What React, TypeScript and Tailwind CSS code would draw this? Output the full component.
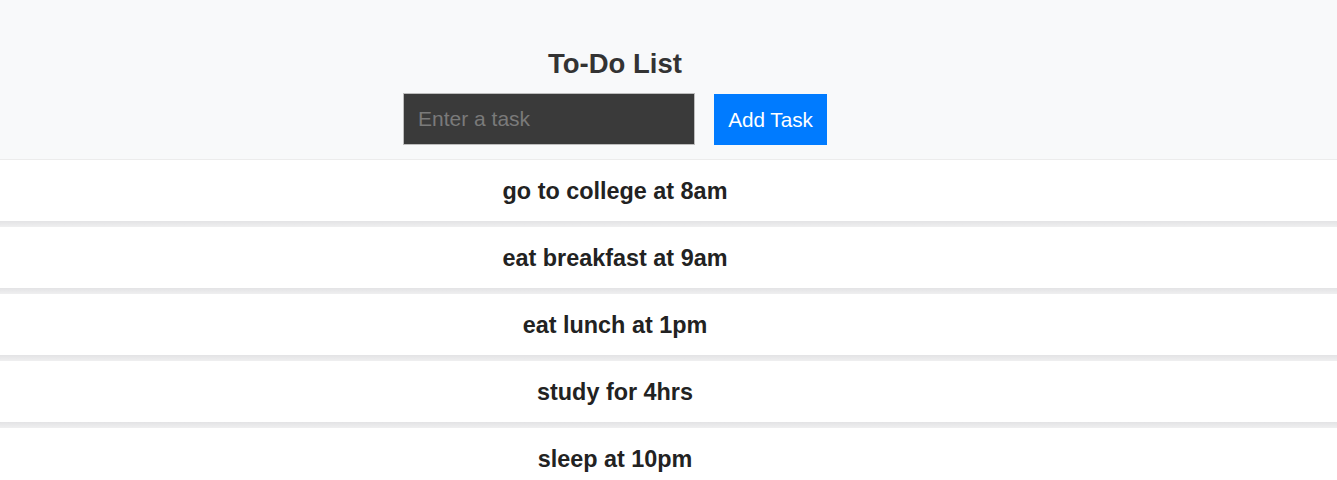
import React from "react";

const tasks = [
  "go to college at 8am",
  "eat breakfast at 9am",
  "eat lunch at 1pm",
  "study for 4hrs",
  "sleep at 10pm",
];

export default function App() {
  return (
    <div className="min-h-[480px] bg-white font-['Liberation_Sans',Arial,sans-serif]">
      <div className="flex flex-col items-center bg-[#f8f9fa] pt-[48px] pb-[14px] pr-[107px] border-b border-[#ececec]">
        <h1 className="text-[27.5px] leading-[31px] font-bold text-[#333]">To-Do List</h1>
        <div className="mt-[14px] flex gap-[19px]">
          <input
            placeholder="Enter a task"
            className="h-[52px] w-[292px] border border-[#bdbdbd] bg-[#3a3a3a] px-[14px] text-[21px] text-white placeholder:text-[#7a7a7a] outline-none"
          />
          <button className="mt-[1px] h-[51px] w-[113px] bg-[#007bff] text-[20.7px] text-white">Add Task</button>
        </div>
      </div>
      <ul>
        {tasks.map((t) => (
          <li key={t}>
            <div className="flex h-[61px] items-center justify-center pt-[2px] pr-[107px] bg-white text-[23.4px] font-bold text-[#222]">
              {t}
            </div>
            <div className="h-[6px] bg-linear-to-b from-[#e3e3e5] to-[#efeff0]" />
          </li>
        ))}
      </ul>
    </div>
  );
}
